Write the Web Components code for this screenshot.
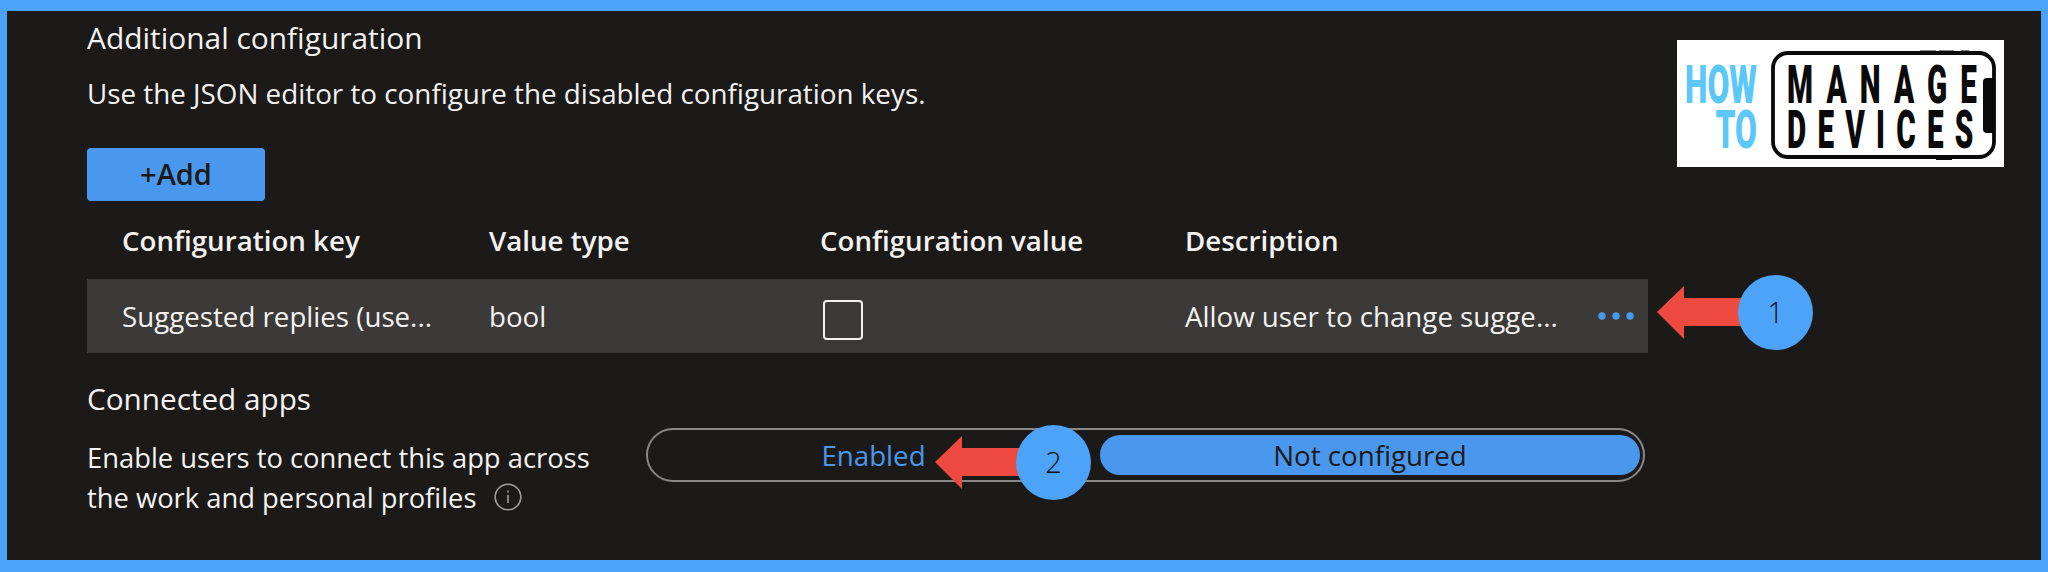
<!DOCTYPE html>
<html>
<head>
<meta charset="utf-8">
<title>Additional configuration</title>
<style>
  html, body { margin: 0; padding: 0; background: #4da3f7; }
  body {
    width: 2048px;
    height: 572px;
    overflow: hidden;
    font-family: "Open Sans", "Noto Sans", sans-serif;
    font-size: 27.7px;
    color: #f3f2f1;
  }
</style>
</head>
<body>
<hmd-frame>
  <hmd-heading title="Additional configuration" text="Use the JSON editor to configure the disabled configuration keys."></hmd-heading>
  <add-button>+Add</add-button>
  <key-table>
    <key-row head><span>Configuration key</span><span>Value type</span><span>Configuration value</span><span>Description</span></key-row>
    <key-row><span>Suggested replies (use...</span><span>bool</span><check-box></check-box><span>Allow user to change sugge...</span><more-dots></more-dots></key-row>
  </key-table>
  <connected-apps>
    <span slot="title">Connected apps</span>
    Enable users to connect this app across<br>the work and personal profiles
    <seg-toggle slot="control" left="Enabled" right="Not configured"></seg-toggle>
  </connected-apps>
</hmd-frame>
<hmd-logo></hmd-logo>
<step-callout n="1" tip="1657" mid="312"></step-callout>
<step-callout n="2" tip="935" mid="462"></step-callout>

<script>
class HmdFrame extends HTMLElement {
  constructor() {
    super();
    this.attachShadow({ mode: "open" });
    this.shadowRoot.innerHTML = `
      <style>
        :host {
          display: block;
          box-sizing: border-box;
          width: 2048px;
          height: 572px;
          border-style: solid;
          border-color: #4da3f7;
          border-width: 11px 7px 12px 7px;
          background: #1b1a19;
          padding: 0 0 0 80px;
        }
      </style>
      <slot></slot>
    `;
  }
}
customElements.define("hmd-frame", HmdFrame);

class HmdHeading extends HTMLElement {
  constructor() {
    super();
    this.attachShadow({ mode: "open" });
    this.shadowRoot.innerHTML = `
      <style>
        :host { display: block; height: 137px; }
        div { line-height: 40px; white-space: nowrap; font-size: 27.8px; }
        .title { padding-top: 7px; height: 40px; margin-bottom: 15px; font-size: 29.9px; }
      </style>
      <div class="title">${this.getAttribute("title")}</div>
      <div>${this.getAttribute("text")}</div>
    `;
  }
}
customElements.define("hmd-heading", HmdHeading);

class AddButton extends HTMLElement {
  constructor() {
    super();
    this.attachShadow({ mode: "open" });
    this.shadowRoot.innerHTML = `
      <style>
        :host {
          display: flex;
          align-items: center;
          justify-content: center;
          box-sizing: border-box;
          width: 178px;
          height: 53px;
          padding-bottom: 2px;
          border-radius: 4px;
          background: #4a98ee;
          color: #1b1a19;
          font-size: 29px;
          font-weight: 600;
        }
      </style>
      <slot></slot>
    `;
  }
}
customElements.define("add-button", AddButton);

class KeyTable extends HTMLElement {
  constructor() {
    super();
    this.attachShadow({ mode: "open" });
    this.shadowRoot.innerHTML = `
      <style>
        :host { display: block; width: 1561px; }
      </style>
      <slot></slot>
    `;
  }
}
customElements.define("key-table", KeyTable);

class KeyRow extends HTMLElement {
  constructor() {
    super();
    this.attachShadow({ mode: "open" });
    this.shadowRoot.innerHTML = `
      <style>
        :host {
          display: grid;
          grid-template-columns: 367px 331px 365px 1fr 40px;
          align-items: center;
          height: 74px;
          padding: 0 15px 0 35px;
          background: #3b3a39;
          white-space: nowrap;
        }
        :host([head]) {
          height: 78px;
          background: transparent;
          font-weight: 600;
        }
      </style>
      <slot></slot>
    `;
  }
}
customElements.define("key-row", KeyRow);

class CheckBox extends HTMLElement {
  constructor() {
    super();
    this.attachShadow({ mode: "open" });
    this.shadowRoot.innerHTML = `
      <style>
        :host {
          display: block;
          box-sizing: border-box;
          width: 40px;
          height: 40px;
          margin: 8px 0 0 3px;
          border: 2px solid #f3f2f1;
          border-radius: 4px;
        }
      </style>
    `;
  }
}
customElements.define("check-box", CheckBox);

class MoreDots extends HTMLElement {
  constructor() {
    super();
    this.attachShadow({ mode: "open" });
    this.shadowRoot.innerHTML = `
      <style>
        :host { display: block; width: 40px; height: 8px; margin-left: 4px; }
        svg { display: block; overflow: visible; }
      </style>
      <svg width="40" height="8" viewBox="0 0 40 8" fill="#4a98ee">
        <circle cx="5" cy="4" r="3.7"/><circle cx="19" cy="4" r="3.7"/><circle cx="33" cy="4" r="3.7"/>
      </svg>
    `;
  }
}
customElements.define("more-dots", MoreDots);

class ConnectedApps extends HTMLElement {
  constructor() {
    super();
    this.attachShadow({ mode: "open" });
    this.shadowRoot.innerHTML = `
      <style>
        :host {
          display: grid;
          grid-template-columns: 559px 999px;
          padding-top: 26px;
        }
        .title { grid-column: 1 / 3; height: 43px; line-height: 40px; font-size: 29.7px; }
        .text { line-height: 40px; margin-top: 16px; white-space: nowrap; font-size: 27.35px; }
        .info { display: inline-block; vertical-align: -3px; margin-left: 10px; }
        .control { margin-top: 6px; }
      </style>
      <div class="title"><slot name="title"></slot></div>
      <div class="text"><slot></slot><svg class="info" width="28" height="28" viewBox="0 0 28 28" fill="none" stroke="#a19f9d" stroke-width="1.6">
        <circle cx="14" cy="14" r="12.8"/><path d="M14 12v8"/><path d="M14 7.6v1.8"/>
      </svg></div>
      <div class="control"><slot name="control"></slot></div>
    `;
  }
}
customElements.define("connected-apps", ConnectedApps);

class SegToggle extends HTMLElement {
  constructor() {
    super();
    this.attachShadow({ mode: "open" });
    this.shadowRoot.innerHTML = `
      <style>
        :host {
          display: grid;
          grid-template-columns: 1fr 540px;
          box-sizing: border-box;
          width: 999px;
          height: 54px;
          padding: 5px 3px;
          border: 2px solid #8a8886;
          border-radius: 27px;
          align-items: center;
          text-align: center;
        }
        .left { color: #4a98ee; padding-right: 4px; }
        .right { background: #4a98ee; color: #1b1a19; border-radius: 21px; height: 40px; line-height: 40px; }
      </style>
      <div class="left">${this.getAttribute("left")}</div>
      <div class="right">${this.getAttribute("right")}</div>
    `;
  }
}
customElements.define("seg-toggle", SegToggle);

class HmdLogo extends HTMLElement {
  constructor() {
    super();
    this.attachShadow({ mode: "open" });
    this.shadowRoot.innerHTML = `
      <style>
        :host { position: absolute; left: 1677px; top: 40px; width: 327px; height: 127px; background: #fff; }
        svg { position: absolute; left: 0; top: 0; }
        .words {
          position: absolute;
          top: 23px;
          line-height: 45px;
          white-space: pre;
          font-family: "Roboto", sans-serif;
          font-weight: 900;
          font-size: 53px;
          transform: scaleX(.56);
          transform-origin: 0 0;
        }
        .how { color: #5cc8fa; left: 8px; width: 120px; text-align: right; transform: scaleX(.6); }
        .device { color: #0a0a0a; left: 110px; letter-spacing: 20px; }
        .device::first-line { letter-spacing: 23.4px; }
      </style>
      <svg width="327" height="127" viewBox="0 0 327 127">
        <rect x="96" y="13" width="221" height="104" rx="15" fill="none" stroke="#0a0a0a" stroke-width="3.8"/>
        <path d="M243 10.5h16v2h-16zM262 10.5h15v2h-15zM284 10.5h8v2h-8zM259 117h16v3h-16z" fill="#0a0a0a"/>
        <path d="M317 38h-7a4 4 0 0 0-4 4v47a4 4 0 0 0 4 4h7z" fill="#0a0a0a"/>
      </svg>
      <div class="words how">HOW
TO</div>
      <div class="words device">MANAGE
DEVICES</div>
    `;
  }
}
customElements.define("hmd-logo", HmdLogo);

class StepCallout extends HTMLElement {
  constructor() {
    super();
    this.attachShadow({ mode: "open" });
    const tip = Number(this.getAttribute("tip"));
    const mid = Number(this.getAttribute("mid"));
    this.shadowRoot.innerHTML = `
      <style>
        :host { position: absolute; left: ${tip}px; top: ${mid - 38}px; width: 158px; height: 76px; }
        svg { display: block; }
        text { font-family: "Open Sans", sans-serif; font-size: 29px; font-weight: 300; fill: #111; }
      </style>
      <svg width="158" height="76" viewBox="0 0 158 76">
        <path d="M0 38 L27 12 V24 H84 V52 H27 V65 Z" fill="#ef4a3f"/>
        <circle cx="118.5" cy="38.5" r="37.5" fill="#4da3f7"/>
        <text x="118.5" y="49" text-anchor="middle">${this.getAttribute("n")}</text>
      </svg>
    `;
  }
}
customElements.define("step-callout", StepCallout);
</script>
</body>
</html>
